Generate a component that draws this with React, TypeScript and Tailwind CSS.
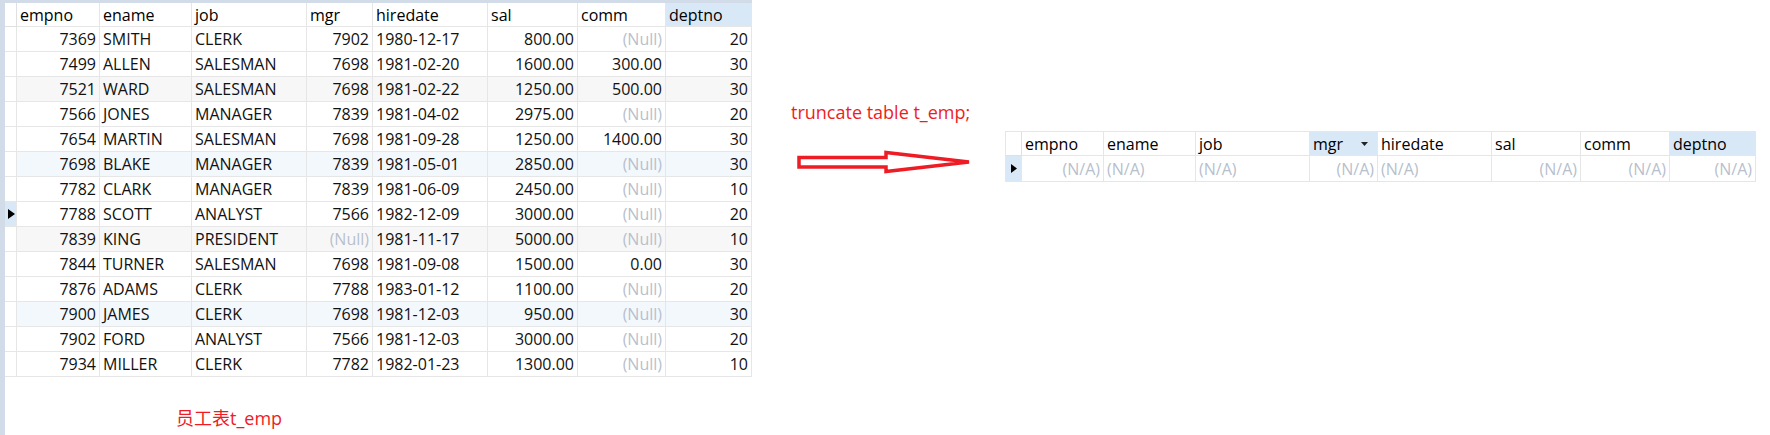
import React from "react";

type Col = { key: string; right: boolean };

const cols: Col[] = [
  { key: "empno", right: true },
  { key: "ename", right: false },
  { key: "job", right: false },
  { key: "mgr", right: true },
  { key: "hiredate", right: false },
  { key: "sal", right: true },
  { key: "comm", right: true },
  { key: "deptno", right: true },
];

const rows: string[][] = [
  ["7369", "SMITH", "CLERK", "7902", "1980-12-17", "800.00", "(Null)", "20"],
  ["7499", "ALLEN", "SALESMAN", "7698", "1981-02-20", "1600.00", "300.00", "30"],
  ["7521", "WARD", "SALESMAN", "7698", "1981-02-22", "1250.00", "500.00", "30"],
  ["7566", "JONES", "MANAGER", "7839", "1981-04-02", "2975.00", "(Null)", "20"],
  ["7654", "MARTIN", "SALESMAN", "7698", "1981-09-28", "1250.00", "1400.00", "30"],
  ["7698", "BLAKE", "MANAGER", "7839", "1981-05-01", "2850.00", "(Null)", "30"],
  ["7782", "CLARK", "MANAGER", "7839", "1981-06-09", "2450.00", "(Null)", "10"],
  ["7788", "SCOTT", "ANALYST", "7566", "1982-12-09", "3000.00", "(Null)", "20"],
  ["7839", "KING", "PRESIDENT", "(Null)", "1981-11-17", "5000.00", "(Null)", "10"],
  ["7844", "TURNER", "SALESMAN", "7698", "1981-09-08", "1500.00", "0.00", "30"],
  ["7876", "ADAMS", "CLERK", "7788", "1983-01-12", "1100.00", "(Null)", "20"],
  ["7900", "JAMES", "CLERK", "7698", "1981-12-03", "950.00", "(Null)", "30"],
  ["7902", "FORD", "ANALYST", "7566", "1981-12-03", "3000.00", "(Null)", "20"],
  ["7934", "MILLER", "CLERK", "7782", "1982-01-23", "1300.00", "(Null)", "10"],
];

const rowBg = (i: number) => {
  if (i === 2 || i === 8) return "bg-[#f7f7f7]";
  if (i === 5 || i === 11) return "bg-[#f3f8fd]";
  return "bg-white";
};

const Tri = ({ w, h }: { w: number; h: number }) => (
  <svg width={w} height={h} viewBox={`0 0 ${w} ${h}`}>
    <path d={`M0 0L${w} ${h / 2}L0 ${h}Z`} fill="#000" />
  </svg>
);

const cellBase =
  "flex items-center border-r border-b border-[#e6e6e6] px-[3px] whitespace-nowrap overflow-hidden";

function LeftTable() {
  return (
    <div className="grid grid-cols-[12px_83px_92px_115px_66px_115px_90px_88px_86px] w-[747px]">
      <div className="h-[24px] border-r border-b border-[#e0e0e0] bg-white" />
      {cols.map((c) => (
        <div
          key={c.key}
          className={`${cellBase} h-[24px] border-[#e0e0e0] text-[#000] ${
            c.key === "deptno" ? "bg-[#d9e8f7]" : "bg-white"
          }`}
        >
          {c.key}
        </div>
      ))}
      {rows.map((r, i) => (
        <React.Fragment key={i}>
          <div
            className={`flex items-center pl-[3px] h-[25px] border-r border-b border-[#e6e6e6] ${
              i === 7 ? "bg-[#d9e8f7]" : "bg-white"
            }`}
          >
            {i === 7 && <Tri w={7} h={10} />}
          </div>
          {r.map((v, j) => (
            <div
              key={j}
              className={`${cellBase} h-[25px] ${rowBg(i)} ${
                cols[j].right ? "justify-end" : "justify-start"
              } ${v === "(Null)" ? "text-[#b7bfcd]" : "text-[#111111]"}`}
            >
              {v}
            </div>
          ))}
        </React.Fragment>
      ))}
    </div>
  );
}

function RightTable() {
  return (
    <div className="grid grid-cols-[16px_82px_92px_114px_68px_114px_89px_89px_86px] border-t border-l border-[#e6e6e6] w-[751px]">
      <div className="h-[24px] border-r border-b border-[#e0e0e0] bg-white" />
      {cols.map((c) => (
        <div
          key={c.key}
          className={`${cellBase} h-[24px] border-[#e0e0e0] text-[#000] ${
            c.key === "mgr" || c.key === "deptno" ? "bg-[#d9e8f7]" : "bg-white"
          } ${c.key === "mgr" ? "justify-between pr-[9px]" : ""}`}
        >
          <span>{c.key}</span>
          {c.key === "mgr" && (
            <svg width="7" height="4" viewBox="0 0 7 4">
              <path d="M0 0H7L3.5 4Z" fill="#222" />
            </svg>
          )}
        </div>
      ))}
      <div className="flex items-center pl-[5px] h-[26px] border-r border-b border-[#e6e6e6] bg-[#d9e8f7]">
        <Tri w={6} h={9} />
      </div>
      {cols.map((c) => (
        <div
          key={c.key}
          className={`${cellBase} h-[26px] bg-white text-[#b7bfcd] ${
            c.right ? "justify-end" : "justify-start"
          }`}
        >
          (N/A)
        </div>
      ))}
    </div>
  );
}

export default function App() {
  return (
    <div className="flex w-[1770px] h-[435px] bg-white font-['Open_Sans','Noto_Sans_CJK_SC',sans-serif] text-[16px] overflow-hidden">
      <div className="flex">
        <div className="w-[5px] h-[435px] bg-[#d2dbe8]" />
        <div className="flex flex-col w-[747px]">
          <div className="h-[3px] bg-[#d2dbe8]" />
          <LeftTable />
          <div className="ml-[171px] mt-[29px] text-[18px] leading-[24px] text-[#ee1c24]">
            员工表t_emp
          </div>
        </div>
      </div>
      <div className="flex items-start">
        <div className="flex flex-col ml-[39px] w-[214px]">
          <div className="mt-[100px] text-[18px] leading-[24px] text-[#ee1c24] whitespace-nowrap">
            truncate table t_emp;
          </div>
          <svg
            className="mt-[24px] ml-[4px]"
            width="180"
            height="28"
            viewBox="0 0 180 28"
          >
            <path
              d="M4 9.5H91V4.5L174 14L91 23.5V19H4Z"
              fill="none"
              stroke="#ee1c24"
              strokeWidth="3.5"
              strokeLinejoin="miter"
            />
          </svg>
        </div>
        <div className="mt-[131px]">
          <RightTable />
        </div>
      </div>
    </div>
  );
}
